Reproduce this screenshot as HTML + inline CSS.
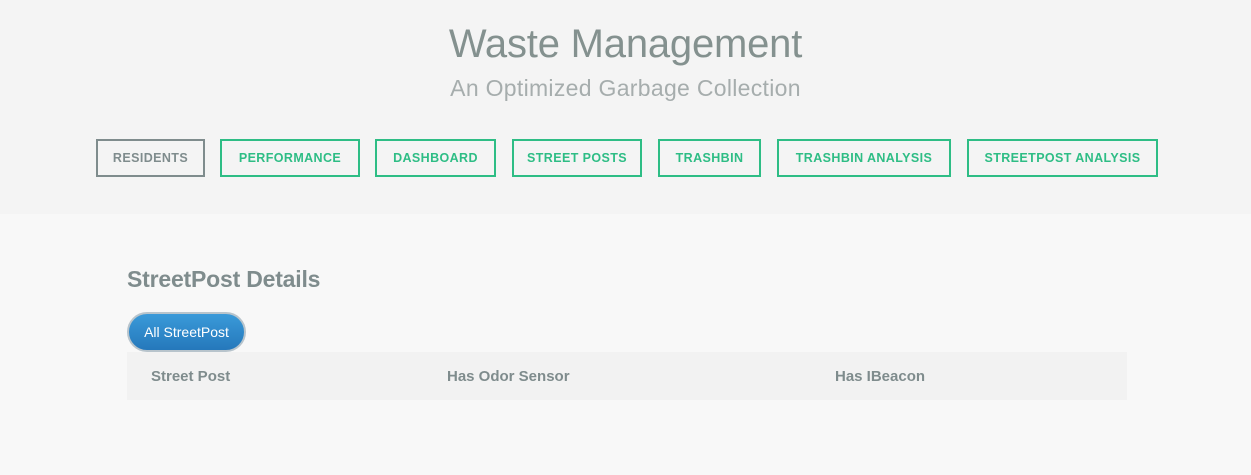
<!DOCTYPE html>
<html><head><style>
*{margin:0;padding:0;box-sizing:border-box}
body{width:1251px;height:475px;background:#f8f8f8;font-family:"Liberation Sans",sans-serif;position:relative;overflow:hidden}
.hdr{position:absolute;left:0;top:0;width:1251px;height:214px;background:#f4f4f4}
.t1{position:absolute;left:0;width:1251px;text-align:center;top:22px;font-size:40px;color:#84918f;font-weight:300;letter-spacing:-0.2px}
.t2{position:absolute;left:0;width:1251px;text-align:center;top:75px;font-size:23px;color:#a6adad;letter-spacing:0.3px}
.b{position:absolute;top:139px;height:38px;border:2px solid #2ebd85;color:#2ebd85;font-size:12.5px;font-weight:bold;letter-spacing:0.4px;text-align:center;line-height:34px}
.b.g{border-color:#7f8c8d;color:#7f8c8d}
h2{position:absolute;left:127px;top:266px;font-size:23px;color:#7f8c8d;font-weight:bold;letter-spacing:-0.2px}
.pill{position:absolute;left:127px;top:312px;width:119px;height:40px;border-radius:20px;background:linear-gradient(#3a9ad9,#2578bb);border:2px solid #b8c4cc;color:#fff;font-size:14px;text-align:center;line-height:36px}
.row{position:absolute;left:127px;top:352px;width:1000px;height:48px;background:#f2f2f2;color:#7f8c8d;font-weight:bold;font-size:15px}
.row span{position:absolute;top:16px}
</style></head><body>
<div class="hdr"></div>
<div class="t1">Waste Management</div>
<div class="t2">An Optimized Garbage Collection</div>
<div class="b g" style="left:96px;width:109px">RESIDENTS</div>
<div class="b" style="left:220px;width:140px">PERFORMANCE</div>
<div class="b" style="left:375px;width:121px">DASHBOARD</div>
<div class="b" style="left:512px;width:130px">STREET POSTS</div>
<div class="b" style="left:658px;width:103px">TRASHBIN</div>
<div class="b" style="left:777px;width:174px">TRASHBIN ANALYSIS</div>
<div class="b" style="left:967px;width:191px">STREETPOST ANALYSIS</div>
<h2>StreetPost Details</h2>
<div class="pill">All StreetPost</div>
<div class="row"><span style="left:24px">Street Post</span><span style="left:320px">Has Odor Sensor</span><span style="left:708px">Has IBeacon</span></div>
</body></html>
